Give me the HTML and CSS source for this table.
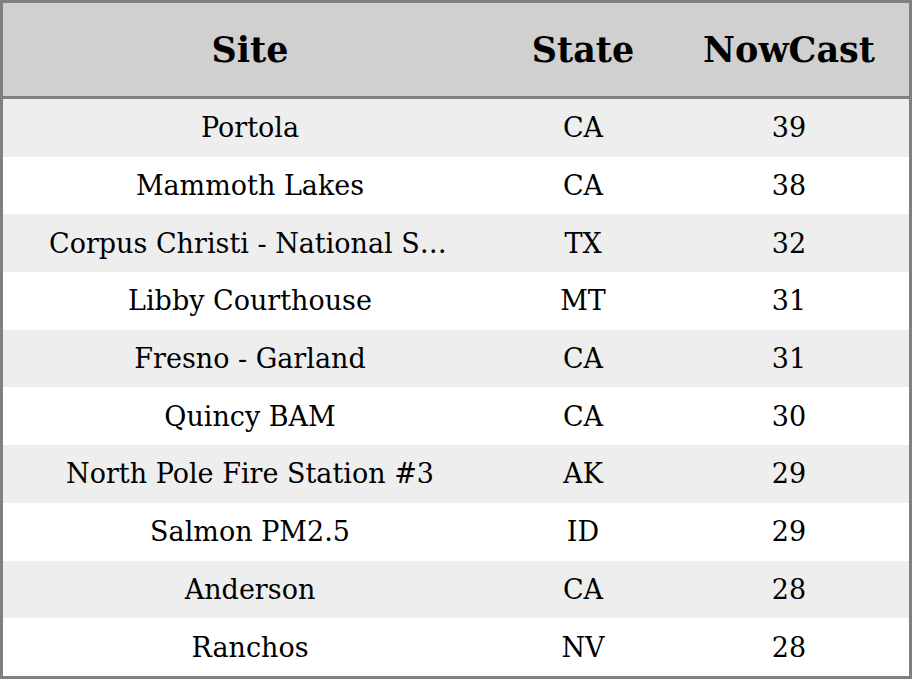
FILE: index.html
```html
<!DOCTYPE html>
<html>
<head>
<meta charset="utf-8">
<link rel="stylesheet" href="styles.css">
</head>
<body>
<table class="grid">
  <colgroup>
    <col class="c-site">
    <col class="c-state">
    <col class="c-now">
  </colgroup>
  <thead>
    <tr><th>Site</th><th>State</th><th>NowCast</th></tr>
  </thead>
  <tbody>
    <tr><td class="site">Portola</td><td>CA</td><td>39</td></tr>
    <tr><td class="site">Mammoth Lakes</td><td>CA</td><td>38</td></tr>
    <tr><td class="site">Corpus Christi - National Seashore</td><td>TX</td><td>32</td></tr>
    <tr><td class="site">Libby Courthouse</td><td>MT</td><td>31</td></tr>
    <tr><td class="site">Fresno - Garland</td><td>CA</td><td>31</td></tr>
    <tr><td class="site">Quincy BAM</td><td>CA</td><td>30</td></tr>
    <tr><td class="site">North Pole Fire Station #3</td><td>AK</td><td>29</td></tr>
    <tr><td class="site">Salmon PM2.5</td><td>ID</td><td>29</td></tr>
    <tr><td class="site">Anderson</td><td>CA</td><td>28</td></tr>
    <tr><td class="site">Ranchos</td><td>NV</td><td>28</td></tr>
  </tbody>
</table>
</body>
</html>
```
FILE: styles.css
```css
html, body {
  margin: 0;
  padding: 0;
  background: #ffffff;
}
.grid {
  width: 912px;
  height: 679px;
  border-collapse: separate;
  border-spacing: 0;
  table-layout: fixed;
  border: 3px solid #808080;
  font-family: "DejaVu Serif", serif;
  color: #000;
}
.c-site { width: 494px; }
.c-state { width: 172px; }
.c-now { width: 240px; }
.grid th {
  height: 93px;
  background: #d0d0d0;
  font-size: 35px;
  font-weight: bold;
  border-bottom: 3px solid #808080;
  text-align: center;
  padding: 0;
}
.grid td {
  height: 57.7px;
  font-size: 27px;
  text-align: center;
  padding: 0;
  white-space: nowrap;
}
.grid td.site {
  padding: 0 46px;
  overflow: hidden;
  text-overflow: ellipsis;
}
.grid tbody tr:nth-child(odd) { background: #eeeeee; }
.grid tbody tr:nth-child(even) { background: #ffffff; }
```
